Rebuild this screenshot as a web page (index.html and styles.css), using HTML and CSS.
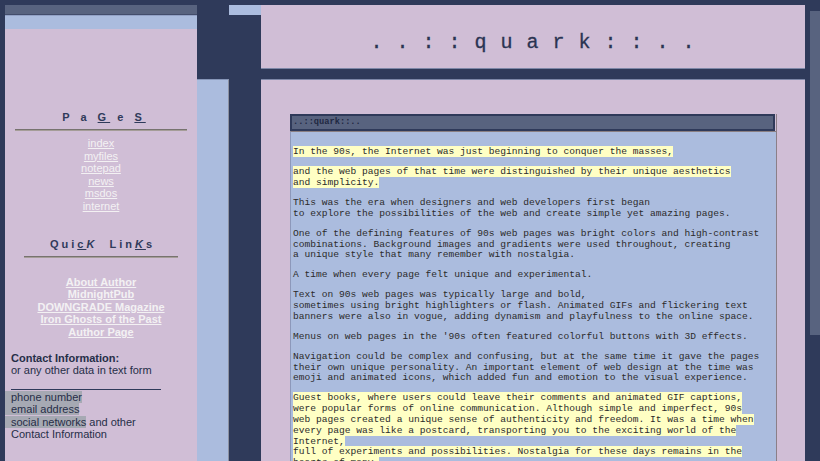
FILE: index.html
```html
<!DOCTYPE html>
<html lang="en">
<head>
<meta charset="utf-8">
<title>..::quark::..</title>
<link rel="stylesheet" href="styles.css">
</head>
<body>
<div class="page">
  <aside class="sidebar">
    <div class="bar-dark"></div>
    <div class="bar-light"></div>
    <nav class="pages">
      <h3 class="side-title">P a <u>G</u> e <u>S</u></h3>
      <hr class="rule wide">
      <ul class="links">
        <li><a href="#">index</a></li>
        <li><a href="#">myfiles</a></li>
        <li><a href="#">notepad</a></li>
        <li><a href="#">news</a></li>
        <li><a href="#">msdos</a></li>
        <li><a href="#">internet</a></li>
      </ul>
    </nav>
    <section class="quick">
      <h3 class="side-title tight">Qui<u>c</u><i>K</i>&nbsp; Lin<u><i>K</i></u>s</h3>
      <hr class="rule narrow">
      <ul class="links bold">
        <li><a href="#">About Author</a></li>
        <li><a href="#">MidnightPub</a></li>
        <li><a href="#">DOWNGRADE Magazine</a></li>
        <li><a href="#">Iron Ghosts of the Past</a></li>
        <li><a href="#">Author Page</a></li>
      </ul>
    </section>
    <section class="contact">
      <div class="contact-head">Contact Information:</div>
      <div>or any other data in text form</div>
      <div class="contact-line"></div>
      <div><span class="hl">phone number</span></div>
      <div><span class="hl">email address</span></div>
      <div><span class="hl">social networks</span> and other</div>
      <div>Contact Information</div>
    </section>
  </aside>
  <div class="gutter-a"></div>
  <div class="gutter-b"><div class="tab"></div></div>
  <main class="main">
    <header class="masthead"><h1 class="logo">. . : : q u a r k : : . .</h1></header>
    <div class="content">
      <div class="box">
        <div class="box-title">..::quark::..</div>
        <div class="box-body">
          <p><span class="mark">In the 90s, the Internet was just beginning to conquer the masses,</span></p>
          <p><span class="mark">and the web pages of that time were distinguished by their unique aesthetics <br>and simplicity.</span></p>
          <p>This was the era when designers and web developers first began<br>to explore the possibilities of the web and create simple yet amazing pages.</p>
          <p>One of the defining features of 90s web pages was bright colors and high-contrast<br>combinations. Background images and gradients were used throughout, creating<br>a unique style that many remember with nostalgia.</p>
          <p>A time when every page felt unique and experimental.</p>
          <p>Text on 90s web pages was typically large and bold,<br>sometimes using bright highlighters or flash. Animated GIFs and flickering text<br>banners were also in vogue, adding dynamism and playfulness to the online space.</p>
          <p>Menus on web pages in the '90s often featured colorful buttons with 3D effects.</p>
          <p>Navigation could be complex and confusing, but at the same time it gave the pages<br>their own unique personality. An important element of web design at the time was<br>emoji and animated icons, which added fun and emotion to the visual experience.</p>
          <p><span class="mark">Guest books, where users could leave their comments and animated GIF captions, <br>were popular forms of online communication. Although simple and imperfect, 90s <br>web pages created a unique sense of authenticity and freedom. It was a time when <br>every page was like a postcard, transporting you to the exciting world of the <br>Internet, <br>full of experiments and possibilities. Nostalgia for these days remains in the <br>hearts of many.</span></p>
        </div>
      </div>
    </div>
  </main>
  <div class="gap"></div>
  <div class="rail"></div>
</div>
</body>
</html>
```

FILE: styles.css
```css
html, body {
  margin: 0;
  padding: 0;
  background: #2f3a5a;
}

.page {
  display: flex;
  align-items: flex-start;
  height: 461px;
  padding-left: 5px;
  box-sizing: border-box;
  overflow: hidden;
}

/* ---------- sidebar ---------- */
.sidebar {
  width: 192px;
  flex: none;
  margin-top: 5px;
  height: 456px;
  background: #d0bed6;
  font-family: "Liberation Sans", Arial, sans-serif;
  font-size: 11px;
}

.bar-dark {
  height: 9px;
  background: #58637f;
  border-bottom: 1px solid #434d6b;
}

.bar-light {
  height: 13px;
  background: #abbcde;
  border-top: 1px solid #93a2c6;
}

.pages {
  padding-top: 82px;
}

.side-title {
  margin: 0;
  font-size: 11px;
  line-height: 13px;
  font-weight: bold;
  letter-spacing: 4px;
  padding-left: 6px;
  text-align: center;
  color: #2f3a5a;
}

.side-title.tight {
  letter-spacing: 3px;
  padding-left: 3px;
}

.rule {
  height: 0;
  border: 0;
  border-top: 1px solid #77736f;
  border-bottom: 1px solid #a59d98;
  margin: 5px auto 6px;
}

.rule.wide { width: 90%; }
.rule.narrow { width: 80%; margin-bottom: 18px; }

.links {
  list-style: none;
  margin: 0;
  padding: 0;
  text-align: center;
  line-height: 12.6px;
}

.links a {
  color: #f3f1f3;
  text-decoration: underline;
}

.links.bold a {
  font-weight: bold;
}

.quick {
  padding-top: 25px;
}

.contact {
  padding: 13px 0 0 6px;
  line-height: 12.5px;
  color: #262e48;
}

.contact-head {
  font-weight: bold;
}

.contact-line {
  width: 150px;
  height: 12px;
  border-bottom: 1px solid #2f3a5a;
  margin-bottom: 1px;
}

.hl {
  background: #a6a9b3;
  margin-left: -6px;
  padding-left: 6px;
}

/* ---------- gutters ---------- */
.gutter-a {
  width: 32px;
  flex: none;
  margin-top: 79px;
  height: 382px;
  background: #abbcde;
  border-top: 1px solid #8796b8;
  border-right: 1px solid #8d92a2;
  box-sizing: border-box;
}

.gutter-b {
  width: 32px;
  flex: none;
}

.tab {
  margin-top: 5px;
  height: 10px;
  background: #abbcde;
}

/* ---------- main ---------- */
.main {
  width: 544px;
  flex: none;
  margin-top: 5px;
  height: 456px;
  display: flex;
  flex-direction: column;
}

.masthead {
  flex: none;
  height: 64px;
  box-sizing: border-box;
  background: #d0bed6;
  border-bottom: 1px solid #7d87a7;
}

.logo {
  margin: 0;
  padding-top: 26px;
  font-family: "Liberation Mono", "Courier New", monospace;
  font-weight: normal;
  font-size: 20px;
  line-height: 23px;
  letter-spacing: 1px;
  text-align: center;
  color: #2a3452;
  white-space: pre;
  -webkit-text-stroke: 0.3px #2a3452;
}

.content {
  margin-top: 10px;
  flex: 1;
  min-height: 0;
  overflow: hidden;
  background: #d0bed6;
  border-top: 1px solid #7d87a7;
  padding: 34px 0 0 29px;
}

.box {
  width: 487px;
  border-right: 1px solid #8b7f88;
  box-sizing: border-box;
}

.box-title {
  height: 17px;
  box-sizing: border-box;
  margin-right: 1px;
  background: #58637f;
  border: 2px solid #2f3a5a;
  padding-left: 1px;
  font-family: "Liberation Mono", "Courier New", monospace;
  font-weight: bold;
  font-size: 8.7px;
  line-height: 13px;
  color: #1f2842;
}

.box-body {
  height: 340px;
  background: #abbcde;
  border-left: 1px solid #8d98ba;
  border-top: 1px solid #8a7f82;
  padding: 6px 0 0 2px;
  font-family: "Liberation Mono", "Courier New", monospace;
  font-size: 9.6px;
  line-height: 10.8px;
  color: #2b2b2b;
  white-space: nowrap;
}

.box-body p {
  margin: 9.2px 0;
}

.mark {
  background: #ffffc4;
}

/* ---------- right edge ---------- */
.gap {
  width: 5px;
  flex: none;
}

.rail {
  width: 10px;
  flex: none;
  margin-top: 11px;
  height: 324px;
  background: #58637f;
}
```
